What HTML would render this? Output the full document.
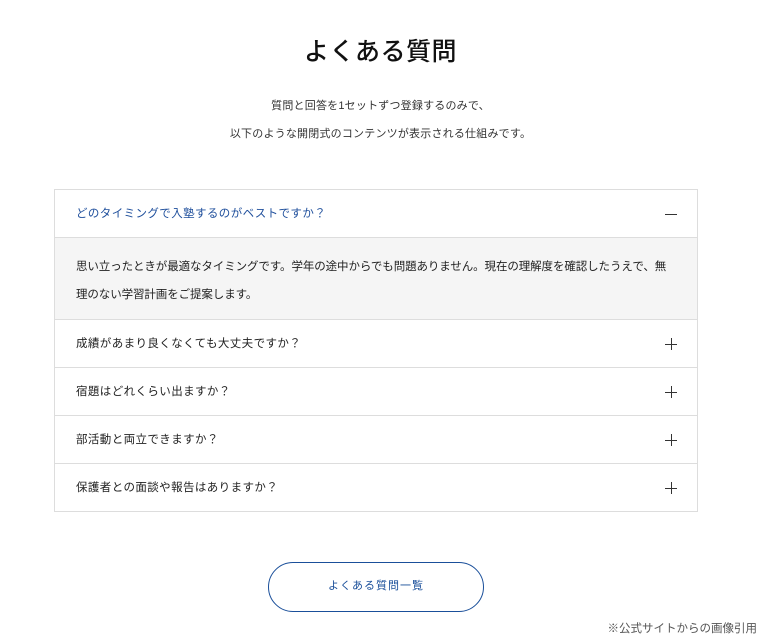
<!DOCTYPE html>
<html><head><meta charset="utf-8"><style>
*{margin:0;padding:0;box-sizing:border-box}
body{width:761px;height:636px;background:#fff;font-family:"Liberation Sans","Noto Sans CJK JP",sans-serif;color:#222;position:relative;overflow:hidden}
h1{position:absolute;top:32px;left:0;width:761px;text-align:center;font-size:25px;font-weight:500;letter-spacing:.5px;color:#111}
.sub{position:absolute;left:0;width:761px;text-align:center;font-size:11px;color:#333;letter-spacing:.2px}
.box{position:absolute;left:54px;top:189px;width:644px;border:1px solid #ddd;border-bottom:none}
.row{height:48px;border-bottom:1px solid #ddd;position:relative;font-size:11.5px;padding-left:21px;line-height:49px;letter-spacing:.4px}
.row.open{color:#1f4f9c}
.ans{background:#f5f5f5;border-bottom:1px solid #ddd;height:82px;padding:15px 0 0 21px;font-size:11.5px;line-height:28px;letter-spacing:-.1px;white-space:nowrap}
.ic{position:absolute;right:20px;top:18px;width:12px;height:12px}
.ic:before{content:"";position:absolute;left:0;top:5.5px;width:12px;height:1.2px;background:#333}
.plus:after{content:"";position:absolute;left:5.5px;top:0;width:1.2px;height:12px;background:#333}
.btn{position:absolute;left:268px;top:562px;width:216px;height:50px;border:1.5px solid #1a4f9a;border-radius:25px;text-align:center;line-height:47px;font-size:11px;color:#1a4f9a;letter-spacing:1px}
.note{position:absolute;right:4px;top:620px;font-size:11.5px;color:#555}
</style></head><body>
<h1>よくある質問</h1>
<div class="sub" style="top:97px">質問と回答を1セットずつ登録するのみで、</div>
<div class="sub" style="top:125px">以下のような開閉式のコンテンツが表示される仕組みです。</div>
<div class="box">
<div class="row open">どのタイミングで入塾するのがベストですか？<span class="ic"></span></div>
<div class="ans">思い立ったときが最適なタイミングです。学年の途中からでも問題ありません。現在の理解度を確認したうえで、無<br>理のない学習計画をご提案します。</div>
<div class="row">成績があまり良くなくても大丈夫ですか？<span class="ic plus"></span></div>
<div class="row">宿題はどれくらい出ますか？<span class="ic plus"></span></div>
<div class="row">部活動と両立できますか？<span class="ic plus"></span></div>
<div class="row">保護者との面談や報告はありますか？<span class="ic plus"></span></div>
</div>
<div class="btn">よくある質問一覧</div>
<div class="note">※公式サイトからの画像引用</div>
</body></html>
